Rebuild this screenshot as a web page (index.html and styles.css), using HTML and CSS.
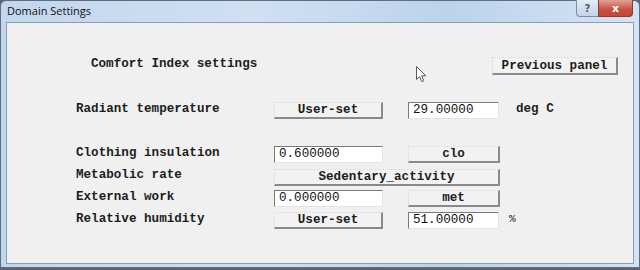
FILE: index.html
```html
<!DOCTYPE html>
<html>
<head>
<meta charset="utf-8">
<title>Domain Settings</title>
<link rel="stylesheet" href="styles.css">
</head>
<body>
<div class="window">
  <div class="titlebar">
    <span class="title">Domain Settings</span>
    <div class="caption-buttons">
      <span class="cap-btn help">?</span>
      <span class="cap-btn close">x</span>
    </div>
  </div>
  <div class="client">
    <div class="header">
      <span class="heading">Comfort Index settings</span>
      <span class="btn prev">Previous panel</span>
    </div>
    <div class="form">
      <div class="row">
        <span class="label">Radiant temperature</span>
        <span class="btn wide">User-set</span>
        <span class="field narrow">29.00000</span>
        <span class="unit unit-deg">deg C</span>
      </div>
      <div class="row row-gap">
        <span class="label">Clothing insulation</span>
        <span class="field wide">0.600000</span>
        <span class="btn narrow">clo</span>
      </div>
      <div class="row">
        <span class="label">Metabolic rate</span>
        <span class="btn span2">Sedentary_activity</span>
      </div>
      <div class="row">
        <span class="label">External work</span>
        <span class="field wide">0.000000</span>
        <span class="btn narrow">met</span>
      </div>
      <div class="row">
        <span class="label">Relative humidity</span>
        <span class="btn wide">User-set</span>
        <span class="field narrow">51.00000</span>
        <span class="unit unit-pct">%</span>
      </div>
    </div>
    <svg class="cursor" width="11" height="17" viewBox="0 0 11 17">
      <path d="M0.5 0.5 L0.5 13.5 L3.6 10.6 L5.8 15.6 L7.8 14.7 L5.7 9.8 L9.8 9.8 Z" fill="#ffffff" stroke="#5a5a5a" stroke-width="1" stroke-linejoin="round"/>
    </svg>
  </div>
</div>
</body>
</html>
```
FILE: styles.css
```css
html, body {
  margin: 0;
  padding: 0;
}
body {
  width: 640px;
  height: 270px;
  background: #5b6470;
  overflow: hidden;
}
.window {
  box-sizing: border-box;
  width: 640px;
  height: 268px;
  border: 1px solid #5e6d80;
  border-radius: 6px 6px 0 0;
  background: linear-gradient(90deg, #c2d6ed 0%, #cfe0f3 40%, #bcd3ec 70%, #d3e3f5 100%);
  padding: 0 5px 3px 5px;
  display: flex;
  flex-direction: column;
}
.titlebar {
  height: 21px;
  display: flex;
  align-items: flex-start;
  justify-content: space-between;
}
.title {
  font-family: "Open Sans", "Noto Sans", sans-serif;
  font-size: 11px;
  color: #111;
  padding-left: 1px;
  line-height: 20px;
}
.caption-buttons {
  display: flex;
  margin-top: -1px;
  margin-right: 1px;
}
.cap-btn {
  box-sizing: border-box;
  height: 17px;
  display: flex;
  align-items: center;
  justify-content: center;
  font-family: "DejaVu Sans", sans-serif;
  font-weight: bold;
  font-size: 10px;
}
.help {
  width: 22px;
  background: linear-gradient(#e4ecf5, #c5d3e3);
  border: 1px solid #7d8ea4;
  border-top: none;
  border-right: none;
  border-radius: 0 0 0 4px;
  color: #4a5a6e;
}
.close {
  width: 35px;
  background: linear-gradient(#e2a396, #c9503f 60%, #c0463a);
  border: 1px solid #8a3b31;
  border-top: none;
  border-radius: 0 0 4px 0;
  color: #fff;
  font-size: 11px;
}
.client {
  position: relative;
  flex: 1;
  border: 1px solid #8c9bae;
  background: #f0f0f0;
  padding: 34px 0 0 69px;
  font-family: "Liberation Mono", "Courier New", monospace;
  font-weight: bold;
  font-size: 12.6px;
  color: #1c1c1c;
}
.header {
  display: flex;
  align-items: flex-start;
  height: 18px;
}
.heading {
  margin-left: 15px;
  line-height: 14px;
  width: 401px;
}
.btn {
  box-sizing: border-box;
  height: 17px;
  background: #f2f2f2;
  border-top: 1px dotted #d8d8d8;
  border-left: 1px dotted #d8d8d8;
  border-right: 2px solid #8a8a8a;
  border-bottom: 2px solid #8a8a8a;
  display: flex;
  align-items: center;
  justify-content: center;
  line-height: 14px;
  white-space: nowrap;
}
.prev {
  width: 126px;
  height: 18px;
}
.form {
  display: flex;
  flex-direction: column;
  gap: 5px;
  margin-top: 27px;
}
.row {
  display: flex;
  align-items: flex-start;
  height: 17px;
}
.row-gap {
  margin-top: 22px;
}
.label {
  width: 198px;
  line-height: 14px;
  white-space: nowrap;
}
.wide {
  width: 109px;
  margin-right: 25px;
}
.narrow {
  width: 92px;
}
.field.narrow {
  width: 91px;
}
.span2 {
  width: 226px;
  margin-top: 1px;
}
.field {
  box-sizing: border-box;
  height: 17px;
  background: #ffffff;
  border-top: 1px solid #7a7a7a;
  border-left: 1px solid #7a7a7a;
  border-right: 1px solid #e4e4e4;
  border-bottom: 1px solid #e4e4e4;
  padding-left: 4px;
  font-weight: normal;
  line-height: 15px;
  color: #111;
}
.unit {
  line-height: 14px;
}
.unit-deg {
  padding-left: 17px;
}
.unit-pct {
  padding-left: 10px;
  font-weight: normal;
  font-size: 11px;
}
.cursor {
  position: absolute;
  left: 409px;
  top: 43px;
}
```
